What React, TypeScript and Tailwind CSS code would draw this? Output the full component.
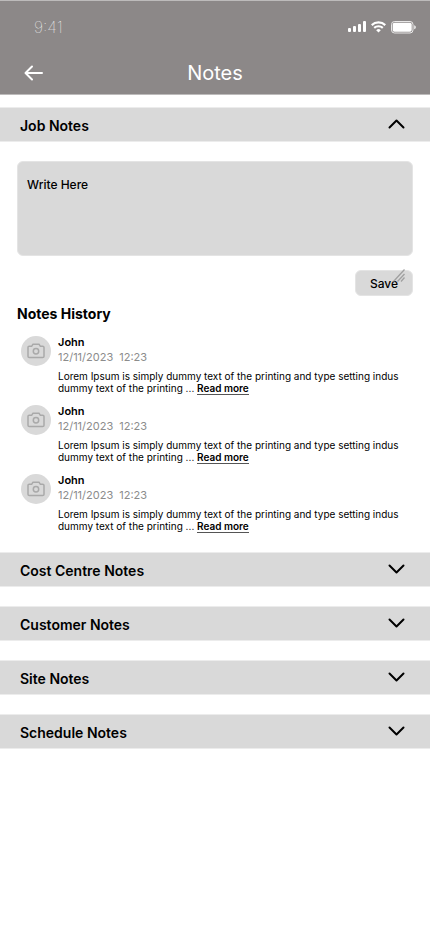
import { useState } from "react";

type Note = { id: number; author: string; date: string; time: string; text: string };

const text =
  "Lorem Ipsum is simply dummy text of the printing and type setting indus dummy text of the printing ...";

const notes: Note[] = [1, 2, 3].map((id) => ({
  id,
  author: "John",
  date: "12/11/2023",
  time: "12:23",
  text,
}));

function StatusBar() {
  return (
    <div className="flex h-[52px] items-center justify-between pr-[14px] pl-[34px]">
      <span className="text-base leading-5 font-thin text-white">9:41</span>
      <div className="flex items-center gap-[5px] text-white">
        <svg width="18" height="12" viewBox="0 0 18 12" fill="currentColor" aria-hidden="true">
          <rect x="0" y="7" width="3" height="4" rx="1" />
          <rect x="5" y="5" width="3" height="6" rx="1" />
          <rect x="10" y="3" width="3" height="8" rx="1" />
          <rect x="15" y="0" width="3" height="11" rx="1" />
        </svg>
        <svg width="15" height="12" viewBox="0 0 15 12" fill="none" aria-hidden="true">
          <path d="M.7 4.100C4.500.5 10.500.5 14.300 4.100" stroke="currentColor" strokeWidth="2.200" />
          <path d="M3.200 6.900c2.400-2.200 6.200-2.200 8.600 0" stroke="currentColor" strokeWidth="2.200" />
          <path d="M5.200 9.200a3.300 3.300 0 0 1 4.600 0L7.500 11.600z" fill="currentColor" />
        </svg>
        <svg width="25" height="13" viewBox="0 0 25 13" fill="none" aria-hidden="true">
          <rect x=".5" y=".5" width="21.5" height="11.5" rx="3" stroke="currentColor" opacity=".8" />
          <rect x="1.700" y="1.700" width="19" height="9" rx="1.700" fill="currentColor" />
          <path d="M23.300 4.200v4c.9-.3 1.400-1.100 1.400-2s-.5-1.700-1.400-2z" fill="currentColor" />
        </svg>
      </div>
    </div>
  );
}

function Chevron({ open }: { open: boolean }) {
  return (
    <svg width="17" height="10" viewBox="0 0 17 10" fill="none" aria-hidden="true">
      <path
        d={open ? "M1.500 8.500 8.500 1.500l7 7" : "M1.500 1.500 8.500 8.500l7-7"}
        stroke="#000"
        strokeWidth="2"
        strokeLinecap="round"
        strokeLinejoin="round"
      />
    </svg>
  );
}

function SectionBar({ title, open = false, onToggle }: { title: string; open?: boolean; onToggle: () => void }) {
  return (
    <h2>
      <button
        type="button"
        aria-expanded={open}
        onClick={onToggle}
        className="flex h-[35px] w-full items-center justify-between border-y border-[#ececec] bg-[#d9d9d9] pr-[25px] pl-5 text-left"
      >
        <span className="pt-[3px] text-sm leading-5 font-semibold">{title}</span>
        <span className="pb-[2px]">
          <Chevron open={open} />
        </span>
      </button>
    </h2>
  );
}

function Avatar() {
  return (
    <span className="flex size-[30px] shrink-0 items-center justify-center rounded-full bg-[#d9d9d9]">
      <svg width="18" height="16" viewBox="0 0 18 16" fill="none" stroke="#a9a9a9" strokeWidth="1.500" aria-hidden="true">
        <path
          d="M2.300 3.200h2.500L6 1.200h6l1.200 2h2.500c.8 0 1.300.5 1.300 1.300v8.700c0 .8-.5 1.300-1.300 1.300H2.300c-.8 0-1.300-.5-1.300-1.300V4.500c0-.8.5-1.300 1.300-1.300z"
          strokeLinejoin="round"
        />
        <circle cx="9" cy="8.300" r="2.700" />
      </svg>
    </span>
  );
}

function NoteItem({ note }: { note: Note }) {
  return (
    <li className="flex gap-[7px]">
      <Avatar />
      <div className="min-w-0 flex-1">
        <p className="text-[11px] leading-3 font-semibold">{note.author}</p>
        <p className="mt-px flex gap-[6px] text-[11px] leading-4 text-[#8c8c8c]">
          <span>{note.date}</span>
          <span>{note.time}</span>
        </p>
        <p className="mt-[5px] max-w-[350px] text-[10px] leading-3">
          {note.text}{" "}
          <a href="#note" className="inline-block border-b border-[#555] font-semibold">
            Read more
          </a>
        </p>
      </div>
    </li>
  );
}

export default function App() {
  const [openSection, setOpenSection] = useState("Job Notes");
  const toggle = (name: string) => setOpenSection(openSection === name ? "" : name);

  return (
    <div className="min-h-screen bg-white font-['Inter',sans-serif] text-black">
      <header className="h-[95px] border-y border-[#bdbbbb] bg-[#8c8888]">
        <StatusBar />
        <div className="grid grid-cols-[1fr_auto_1fr] items-center px-6 pt-1">
          <button type="button" aria-label="Back" className="w-5 text-white">
            <svg width="20" height="16" viewBox="0 0 20 16" fill="none" stroke="currentColor" strokeWidth="2" strokeLinecap="round" strokeLinejoin="round" aria-hidden="true">
              <path d="M18 8H2M8 1.500 1.500 8 8 14.500" />
            </svg>
          </button>
          <h1 className="text-xl leading-8 text-white">Notes</h1>
        </div>
      </header>

      <main className="flex flex-col gap-[19px] pt-3">
        <section>
          <SectionBar title="Job Notes" open={openSection === "Job Notes"} onToggle={() => toggle("Job Notes")} />
          {openSection === "Job Notes" && (
            <div className="px-[17px] pt-[19px]">
              <textarea
                aria-label="Write Here"
                placeholder="Write Here"
                className="block h-[95px] w-full resize-none rounded-md border border-[#e4e4e4] bg-[#d9d9d9] px-[9px] py-[13px] text-xs leading-5 font-medium placeholder:text-black"
              />
              <div className="mt-[14px] flex justify-end">
                <button
                  type="button"
                  className="relative h-[26px] w-[58px] rounded-md border border-[#e4e4e4] bg-[#d9d9d9] pt-px text-xs leading-5 font-medium"
                >
                  Save
                  <svg
                    className="absolute -top-[2px] right-[6px]"
                    width="14"
                    height="14"
                    viewBox="0 0 14 14"
                    fill="none"
                    stroke="#a0a0a0"
                    strokeWidth="1.300"
                    aria-hidden="true"
                  >
                    <path d="M1.500 12.500 12.500.500M5.500 12.500l7-7.500M9 12.500l3.500-4" />
                  </svg>
                </button>
              </div>
              <h3 className="mt-2 text-sm leading-5 font-bold">Notes History</h3>
              <ul className="mt-3 flex flex-col gap-[10px] pl-1">
                {notes.map((note) => (
                  <NoteItem key={note.id} note={note} />
                ))}
              </ul>
            </div>
          )}
        </section>
        {["Cost Centre Notes", "Customer Notes", "Site Notes", "Schedule Notes"].map((name) => (
          <SectionBar key={name} title={name} open={openSection === name} onToggle={() => toggle(name)} />
        ))}
      </main>
    </div>
  );
}
